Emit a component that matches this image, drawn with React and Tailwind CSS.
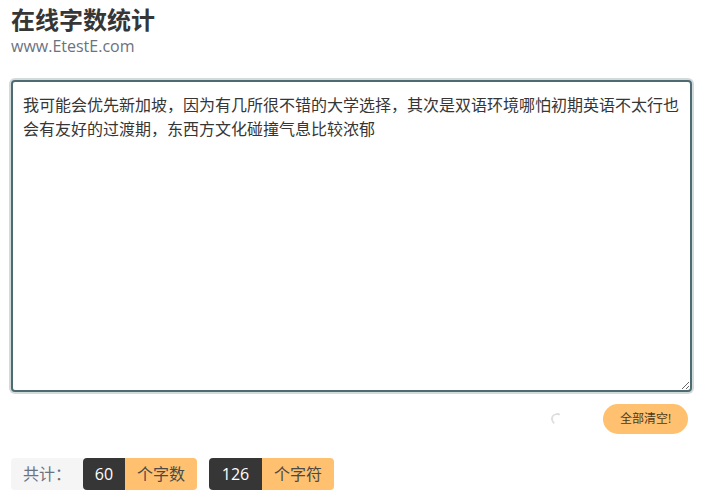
export default function App() {
  return (
    <div className="w-[714px] h-[497px] overflow-hidden bg-white pl-[11px] pr-3 pt-[5px] font-['Open_Sans','Noto_Sans_CJK_SC',sans-serif] text-[#4a4a4a]">
      <h1 className="text-[24px] leading-[30px] font-bold text-[#363636]">在线字数统计</h1>
      <p className="text-[16px] leading-[20px] mt-px text-[#6b7280]">www.EtestE.com</p>
      <div className="mt-[24px]">
        <textarea
          readOnly
          className="block w-[681px] h-[312px] rounded-[4px] border-2 border-[#4f6b72] bg-white px-[10px] pt-[11px] text-[16px] leading-[24px] text-[#363636] outline-none shadow-[0_0_0_2px_rgba(79,107,114,0.25)]"
          defaultValue="我可能会优先新加坡，因为有几所很不错的大学选择，其次是双语环境哪怕初期英语不太行也会有友好的过渡期，东西方文化碰撞气息比较浓郁"
        />
      </div>
      <div className="flex items-center justify-end mt-[12px] h-[30px] pr-[14px]">
        <span className="w-3 h-3 rounded-full border-2 border-[#dedede] border-r-transparent border-b-transparent mr-[40px] -rotate-12" />
        <button className="h-[30px] w-[85px] rounded-full bg-[#ffc06f] text-[12px] text-[#4a3a20]">全部清空!</button>
      </div>
      <div className="flex items-center gap-3 mt-[24px] text-[16px]">
        <div className="flex h-8 items-center rounded-[4px] overflow-hidden">
          <span className="h-8 w-[72px] bg-[#f5f5f5] flex items-center pl-3 text-[#6b7280]">共计：</span>
          <span className="h-8 w-[42px] bg-[#363636] text-white flex items-center justify-center rounded-l-[4px]">60</span>
          <span className="h-8 w-[72px] bg-[#ffc06f] flex items-center justify-center text-[#4a4a4a]">个字数</span>
        </div>
        <div className="flex h-8 items-center rounded-[4px] overflow-hidden">
          <span className="h-8 w-[53px] bg-[#363636] text-white flex items-center justify-center">126</span>
          <span className="h-8 w-[72px] bg-[#ffc06f] flex items-center justify-center text-[#4a4a4a]">个字符</span>
        </div>
      </div>
    </div>
  );
}
